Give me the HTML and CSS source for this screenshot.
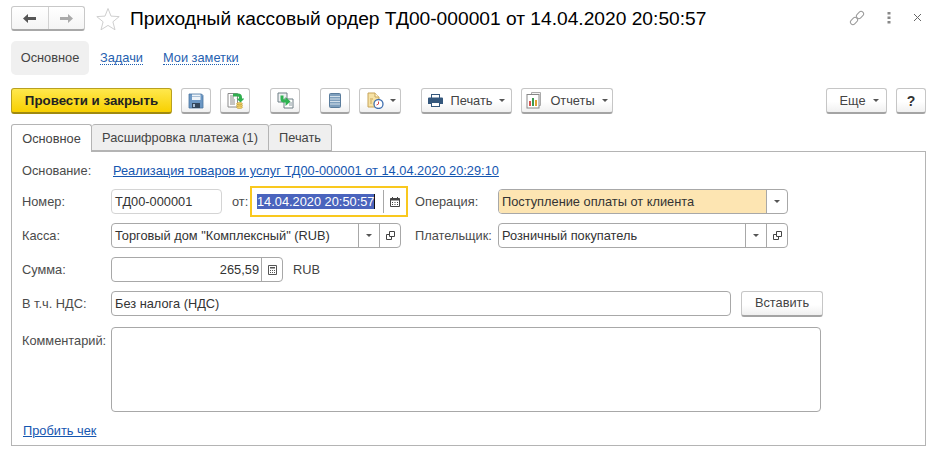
FILE: index.html
```html
<!DOCTYPE html>
<html lang="ru">
<head>
<meta charset="utf-8">
<title>Приходный кассовый ордер</title>
<link rel="stylesheet" href="styles.css">
</head>
<body>
<header class="titlebar">
  <div class="nav">
    <span class="nav-btn"><svg width="13" height="9" viewBox="0 0 13 9"><path d="M0 4.500 5 0v3h8v3H5v3z" fill="#555"/></svg></span>
    <span class="nav-btn nav-next"><svg width="13" height="9" viewBox="0 0 13 9"><path d="M13 4.500 8 0v3H0v3h8v3z" fill="#aaa"/></svg></span>
  </div>
  <svg class="star" width="24" height="24" viewBox="0 0 24 24"><path d="M12 1.500l3 7.600 8.200.5-6.300 5.200 2.100 8L12 18.400l-7 4.400 2.100-8L.8 9.600 9 9.100z" fill="#fff" stroke="#cfcfcf"/></svg>
  <h1 class="title">Приходный кассовый ордер ТД00-000001 от 14.04.2020 20:50:57</h1>
  <div class="win-actions">
    <svg width="16" height="16" viewBox="0 0 16 16" fill="none" stroke="#999" stroke-width="1"><rect x="7" y="2.500" width="8" height="5" rx="2.500" transform="rotate(-45 11 5)"/><rect x="1" y="8.500" width="8" height="5" rx="2.500" transform="rotate(-45 5 11)"/></svg>
    <svg width="4" height="12" viewBox="0 0 4 12" fill="#888"><rect x="0.500" width="3" height="2.500"/><rect x="0.500" y="4.500" width="3" height="2.500"/><rect x="0.500" y="9" width="3" height="2.500"/></svg>
    <svg width="9" height="9" viewBox="0 0 9 9" stroke="#666" stroke-width="1" fill="none"><path d="M1 1l7 7M8 1 1 8"/></svg>
  </div>
</header>

<nav class="sections">
  <span class="section section-active">Основное</span>
  <a class="section-link">Задачи</a>
  <a class="section-link">Мои заметки</a>
</nav>

<div class="toolbar">
  <button class="btn btn-primary">Провести и закрыть</button>
  <button class="btn btn-icon ml9"><svg width="16" height="16" viewBox="0 0 16 16"><path d="M1 1h12.500L15 2.500V15H1z" fill="#6b97c4" stroke="#4a73a0" stroke-width=".8"/><rect x="4" y="1.500" width="8.500" height="5.500" fill="#eef3f8"/><rect x="4" y="3" width="8.500" height="1" fill="#a9bfd6"/><rect x="4" y="10" width="8" height="5" fill="#33475c"/><rect x="5" y="11" width="2" height="3" fill="#a9bfd6"/></svg></button>
  <button class="btn btn-icon ml9"><svg width="17" height="17" viewBox="0 0 17 17"><path d="M1 1.500h9.500V15H1z" fill="#fff" stroke="#8a8a8a"/><path d="M3 4h4M3 6h4M3 8h5M3 10h5M3 12h5" stroke="#8a8a8a"/><path d="M6 3h5a2.500 2.500 0 0 1 2.500 2.500V7" fill="none" stroke="#2fae4e" stroke-width="3"/><path d="M9.500 6.500h8L13.500 10.500z" fill="#2fae4e"/><ellipse cx="12.500" cy="11.800" rx="3" ry="1.300" fill="#f5d36b" stroke="#b7952f" stroke-width=".6"/><ellipse cx="12.500" cy="13.500" rx="3" ry="1.300" fill="#f5d36b" stroke="#b7952f" stroke-width=".6"/><ellipse cx="12.500" cy="15.200" rx="3" ry="1.300" fill="#f5d36b" stroke="#b7952f" stroke-width=".6"/></svg></button>
  <button class="btn btn-icon ml20"><svg width="17" height="17" viewBox="0 0 17 17"><path d="M1 1h9v9H1z" fill="#eef0f2" stroke="#6f7f85"/><path d="M7 7h9v9H7z" fill="#fff" stroke="#6f7f85"/><path d="M12 13h3M12 11h3" stroke="#8a9aa0"/><path d="M5 3.500v3.500a2 2 0 0 0 2 2h2" fill="none" stroke="#2fb352" stroke-width="3"/><path d="M8.500 5l5 4.500-5 4.500z" fill="#2fb352"/></svg></button>
  <button class="btn btn-icon ml20"><svg width="12" height="15" viewBox="0 0 12 15"><rect x=".5" y=".5" width="11" height="14" rx="1" fill="#7e9fbd" stroke="#5a7c9c"/><path d="M1 3.500h10M1 6h10M1 8.500h10M1 11h10" stroke="#d3e0ea"/></svg></button>
  <button class="btn btn-icon-menu ml9"><svg width="17" height="17" viewBox="0 0 17 17"><path d="M1 1h7l4 4v10H1z" fill="#f6e2a5" stroke="#c7a45a"/><path d="M8 1v4h4" fill="#fff6d8" stroke="#c7a45a"/><path d="M3 7h3M3 9h2M3 11h2" stroke="#c7a45a"/><circle cx="11.500" cy="12" r="4.500" fill="#fff" stroke="#3f6fb0" stroke-width="1.300"/><path d="M11.500 9.500V12l-2 1" stroke="#d64a4a" fill="none"/></svg><span class="caret"></span></button>
  <button class="btn btn-text ml20 w-print"><svg width="15" height="13" viewBox="0 0 15 13"><rect x="3.500" y=".5" width="8" height="4" fill="#fff" stroke="#34577c"/><path d="M1 3.500h13a1 1 0 0 1 1 1V10h-3V8H3v2H0V4.500a1 1 0 0 1 1-1z" fill="#34577c"/><rect x="3.500" y="8.500" width="8" height="4" fill="#fff" stroke="#34577c"/></svg><span class="print-label">Печать</span><span class="caret"></span></button>
  <button class="btn btn-text ml9 w-reports"><svg width="17" height="17" viewBox="0 0 17 17"><path d="M5.500 .5h9v13h-9z" fill="#f4f4f4" stroke="#aaa"/><rect x="1" y="2.500" width="12" height="13.500" fill="#fff" stroke="#888"/><rect x="3" y="9" width="2" height="5" fill="#d9534f"/><rect x="6" y="6" width="2" height="8" fill="#3d9a50"/><rect x="9" y="8" width="2" height="6" fill="#e0a030"/></svg><span>Отчеты</span><span class="caret"></span></button>
  <button class="btn btn-more">Еще<span class="caret"></span></button>
  <button class="btn btn-help ml9">?</button>
</div>

<div class="tabs">
  <span class="tab tab-active">Основное</span>
  <span class="tab tab-plain">Расшифровка платежа (1)</span>
  <span class="tab tab-plain">Печать</span>
</div>

<main class="panel">
  <div class="row row-basis">
    <span class="label">Основание:</span>
    <a class="link basis-link">Реализация товаров и услуг ТД00-000001 от 14.04.2020 20:29:10</a>
  </div>
  <div class="row row-num">
    <span class="label">Номер:</span>
    <span class="field w-num">ТД00-000001</span>
    <span class="from">от:</span>
    <span class="focus">
      <span class="date-text"><span class="selected">14.04.2020 20:50:57</span></span>
      <span class="cell cell-date"><svg width="10" height="10" viewBox="0 0 10 10"><path d="M2 0h1v2H2zM7 0h1v2H7z" fill="#444"/><path d="M.5 1.500h9v8h-9z" fill="#fff" stroke="#444"/><path d="M.5 1.500h9v2h-9z" fill="#444"/><path d="M2 5h1v1H2zM4.500 5h1v1h-1zM7 5h1v1H7zM2 7h1v1H2zM4.500 7h1v1h-1zM7 7h1v1H7z" fill="#444"/></svg></span>
    </span>
    <span class="label label-2">Операция:</span>
    <span class="field w-right field-select">
      <span class="value value-hl">Поступление оплаты от клиента</span>
      <span class="cell cell-21"><span class="caret"></span></span>
    </span>
  </div>
  <div class="row">
    <span class="label">Касса:</span>
    <span class="field w-kassa field-select">
      <span class="value">Торговый дом "Комплексный" (RUB)</span>
      <span class="cell cell-21"><span class="caret"></span></span>
      <span class="cell cell-21"><svg class="open" width="9" height="9" viewBox="0 0 9 9" fill="none" stroke="#444"><path d="M3.500.5h5v5h-5z"/><path d="M3.500 3.500h-3v5h5v-3"/></svg></span>
    </span>
    <span class="label label-payer">Плательщик:</span>
    <span class="field w-right field-select">
      <span class="value">Розничный покупатель</span>
      <span class="cell cell-21"><span class="caret"></span></span>
      <span class="cell cell-21"><svg class="open" width="9" height="9" viewBox="0 0 9 9" fill="none" stroke="#444"><path d="M3.500.5h5v5h-5z"/><path d="M3.500 3.500h-3v5h5v-3"/></svg></span>
    </span>
  </div>
  <div class="row">
    <span class="label">Сумма:</span>
    <span class="field w-sum field-select">
      <span class="value value-right">265,59</span>
      <span class="cell cell-21"><svg width="9" height="10" viewBox="0 0 9 10"><path d="M.5.500h8v9h-8z" fill="#fff" stroke="#555"/><path d="M2 2h5v1.500H2z" fill="#555"/><path d="M2 5h1v1H2zM4 5h1v1H4zM6 5h1v1H6zM2 7h1v1H2zM4 7h1v1H4zM6 7h1v1H6z" fill="#555"/></svg></span>
    </span>
    <span class="currency">RUB</span>
  </div>
  <div class="row">
    <span class="label">В т.ч. НДС:</span>
    <span class="field w-vat field-select"><span class="value">Без налога (НДС)</span></span>
    <button class="btn btn-insert">Вставить</button>
  </div>
  <div class="row row-comment">
    <span class="label label-top">Комментарий:</span>
    <span class="field w-comment"></span>
  </div>
  <a class="link check-link">Пробить чек</a>
</main>
</body>
</html>
```
FILE: styles.css
```css
* { box-sizing: border-box; }
html, body { margin: 0; padding: 0; }
body {
  width: 945px;
  height: 458px;
  overflow: hidden;
  background: #fff;
  font: 12.8px/14px "Liberation Sans", Arial, sans-serif;
  color: #4b4b4b;
  padding-left: 11px;
}
svg { display: block; flex: none; }

.titlebar { display: flex; align-items: center; width: 915px; height: 25px; margin-top: 6px; padding-right: 4px; }
.nav {
  display: flex; width: 74px; height: 25px; flex: none;
  background: linear-gradient(#fff, #f4f4f4);
  border: 1px solid #c8c8c8; border-bottom: 2px solid #a8a8a8; border-radius: 3px;
}
.nav-btn { flex: 1; display: flex; align-items: center; justify-content: center; }
.nav-next { border-left: 1px solid #d2d2d2; }
.star { margin-left: 11px; }
.title { margin: 0 0 0 10px; font-size: 19.2px; line-height: 24px; font-weight: 400; color: #000; white-space: nowrap; }
.win-actions { display: flex; align-items: center; gap: 22px; margin-left: auto; margin-bottom: 2px; }

.sections { display: flex; align-items: center; height: 34px; margin-top: 10px; }
.section { display: flex; align-items: center; justify-content: center; width: 78px; height: 34px; background: #f0f0f0; border-radius: 5px; color: #444; }
.section-link { margin-left: 11px; color: #1f5fb0; border-bottom: 1px dotted #1f5fb0; line-height: 13px; }
.section-link + .section-link { margin-left: 20px; }

.toolbar { display: flex; width: 915px; height: 26px; margin-top: 13px; }
.btn {
  display: flex; align-items: center; justify-content: center;
  height: 26px; padding: 0; font: inherit; color: #444;
  background: linear-gradient(#fff 55%, #f0f0f0);
  border: 1px solid #c6c6c6; border-bottom: 2px solid #a4a4a4; border-radius: 3px;
}
.btn-primary {
  width: 161px; font-weight: 700; font-size: 13.3px; color: #222;
  background: linear-gradient(#ffe84d, #f8d000);
  border: 1px solid #b8a020; border-bottom: 2px solid #a08a10;
}
.btn-icon { width: 30px; }
.btn-icon-menu { width: 42px; gap: 6px; padding-left: 2px; }
.btn-text { gap: 7px; }
.print-label { margin-left: 1px; }
.w-print { width: 91px; }
.w-reports { width: 92px; }
.btn-more { width: 61px; margin-left: auto; gap: 7px; padding-left: 5px; }
.btn-help { width: 30px; font-size: 14px; font-weight: 700; color: #333; }
.btn-insert { width: 82px; margin-left: 10px; }
.ml9 { margin-left: 9px; }
.ml20 { margin-left: 20px; }
.caret { width: 0; height: 0; border: 3px solid transparent; border-top: 3px solid #555; border-bottom: 0; flex: none; }

.tabs { display: flex; height: 27px; margin-top: 10px; }
.tab { display: flex; align-items: center; justify-content: center; height: 27px; color: #444; border: 1px solid #b4b4b4; border-radius: 3px 3px 0 0; border-left: 0; background: #efefef; }
.tab-active { width: 81px; border-left: 1px solid #b4b4b4; border-bottom: 0; background: #fff; height: 28px; position: relative; z-index: 1; }
.tab-plain:nth-child(2) { width: 177px; }
.tab-plain:nth-child(3) { width: 63px; }

.panel { width: 915px; height: 295px; border: 1px solid #b4b4b4; padding: 0 0 0 10px; }
.row { display: flex; align-items: center; height: 25px; margin-top: 9px; }
.row-basis { height: 14px; margin-top: 12px; }
.row-num { margin-top: 11px; }
.row-comment { height: 85px; margin-top: 11px; align-items: flex-start; }
.label { width: 89px; flex: none; }
.label-top { margin-top: 7px; white-space: nowrap; }
.label-2 { width: 83px; margin-left: 7px; }
.label-payer { margin-left: 14px; white-space: nowrap; width: 83px; }
.link { color: #1556b0; text-decoration: underline; }
.basis-link { margin-left: 2px; }
.check-link { display: block; margin-top: 12px; margin-left: 1px; width: max-content; }

.field { display: flex; align-items: stretch; height: 25px; line-height: 23px; color: #333; background: #fff; border: 1px solid #a8a8a8; border-radius: 4px; overflow: hidden; }
.row-num > .w-num { border-color: #d4d4d4; padding-left: 3px; }
.w-num { width: 111px; }
.w-kassa { width: 290px; }
.w-right { width: 290px; }
.w-sum { width: 172px; }
.w-vat { width: 620px; }
.w-comment { width: 710px; height: 85px; }
.value { flex: 1; padding: 0 2px 0 3px; white-space: nowrap; }
.value-hl { background: #fde5b2; }
.value-right { text-align: right; padding-right: 2px; }
.cell { display: flex; align-items: center; justify-content: center; border-left: 1px solid #a8a8a8; flex: none; }
.cell-21 { width: 21px; }
.from { width: 18px; margin-left: 10px; flex: none; }
.focus { display: flex; align-items: center; width: 158px; height: 31px; border: 2px solid #f9c81e; flex: none; }
.date-text { width: 131px; padding-left: 5px; color: #fff; }
.selected { background: #4a64bd; display: inline-block; line-height: 15px; border-right: 1px solid #111; }
.cell-date { width: 23px; height: 23px; border-left: 1px solid #a8a8a8; }
.currency { margin-left: 10px; color: #444; }
```
